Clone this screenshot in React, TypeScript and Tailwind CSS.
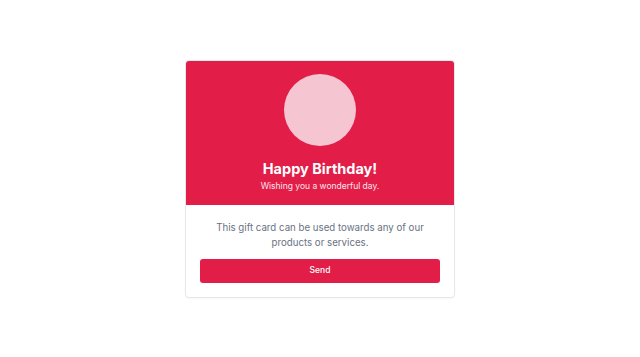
export default function App() {
  return (
    <div
      className="w-full h-[357px] bg-white flex items-center justify-center"
      style={{ fontFamily: "Inter, 'Noto Sans', sans-serif" }}
    >
      <div className="w-[270px] h-[238px] rounded-[4px] border border-gray-200 overflow-hidden flex flex-col bg-white shadow-[0_1px_2px_rgba(0,0,0,0.04)]">
        <div className="h-[144px] bg-[#e11d48] flex flex-col items-center pt-[13px]">
          <div className="w-[72px] h-[72px] rounded-full bg-[#f5c5d2]" />
          <div className="mt-[14px] text-[14.5px] leading-[18px] font-bold text-white">Happy Birthday!</div>
          <div className="mt-[2px] text-[8.5px] leading-[12px] text-[#fde6ec]">Wishing you a wonderful day.</div>
        </div>
        <div className="flex-1 flex flex-col px-[14px] pt-[15px]">
          <p className="text-center text-[9.7px] leading-[15px] text-gray-500 px-2">
            This gift card can be used towards any of our products or services.
          </p>
          <button className="mt-[9px] h-[24px] w-full rounded-[3px] bg-[#e11d48] text-white text-[8.5px] font-medium">
            Send
          </button>
        </div>
      </div>
    </div>
  );
}
